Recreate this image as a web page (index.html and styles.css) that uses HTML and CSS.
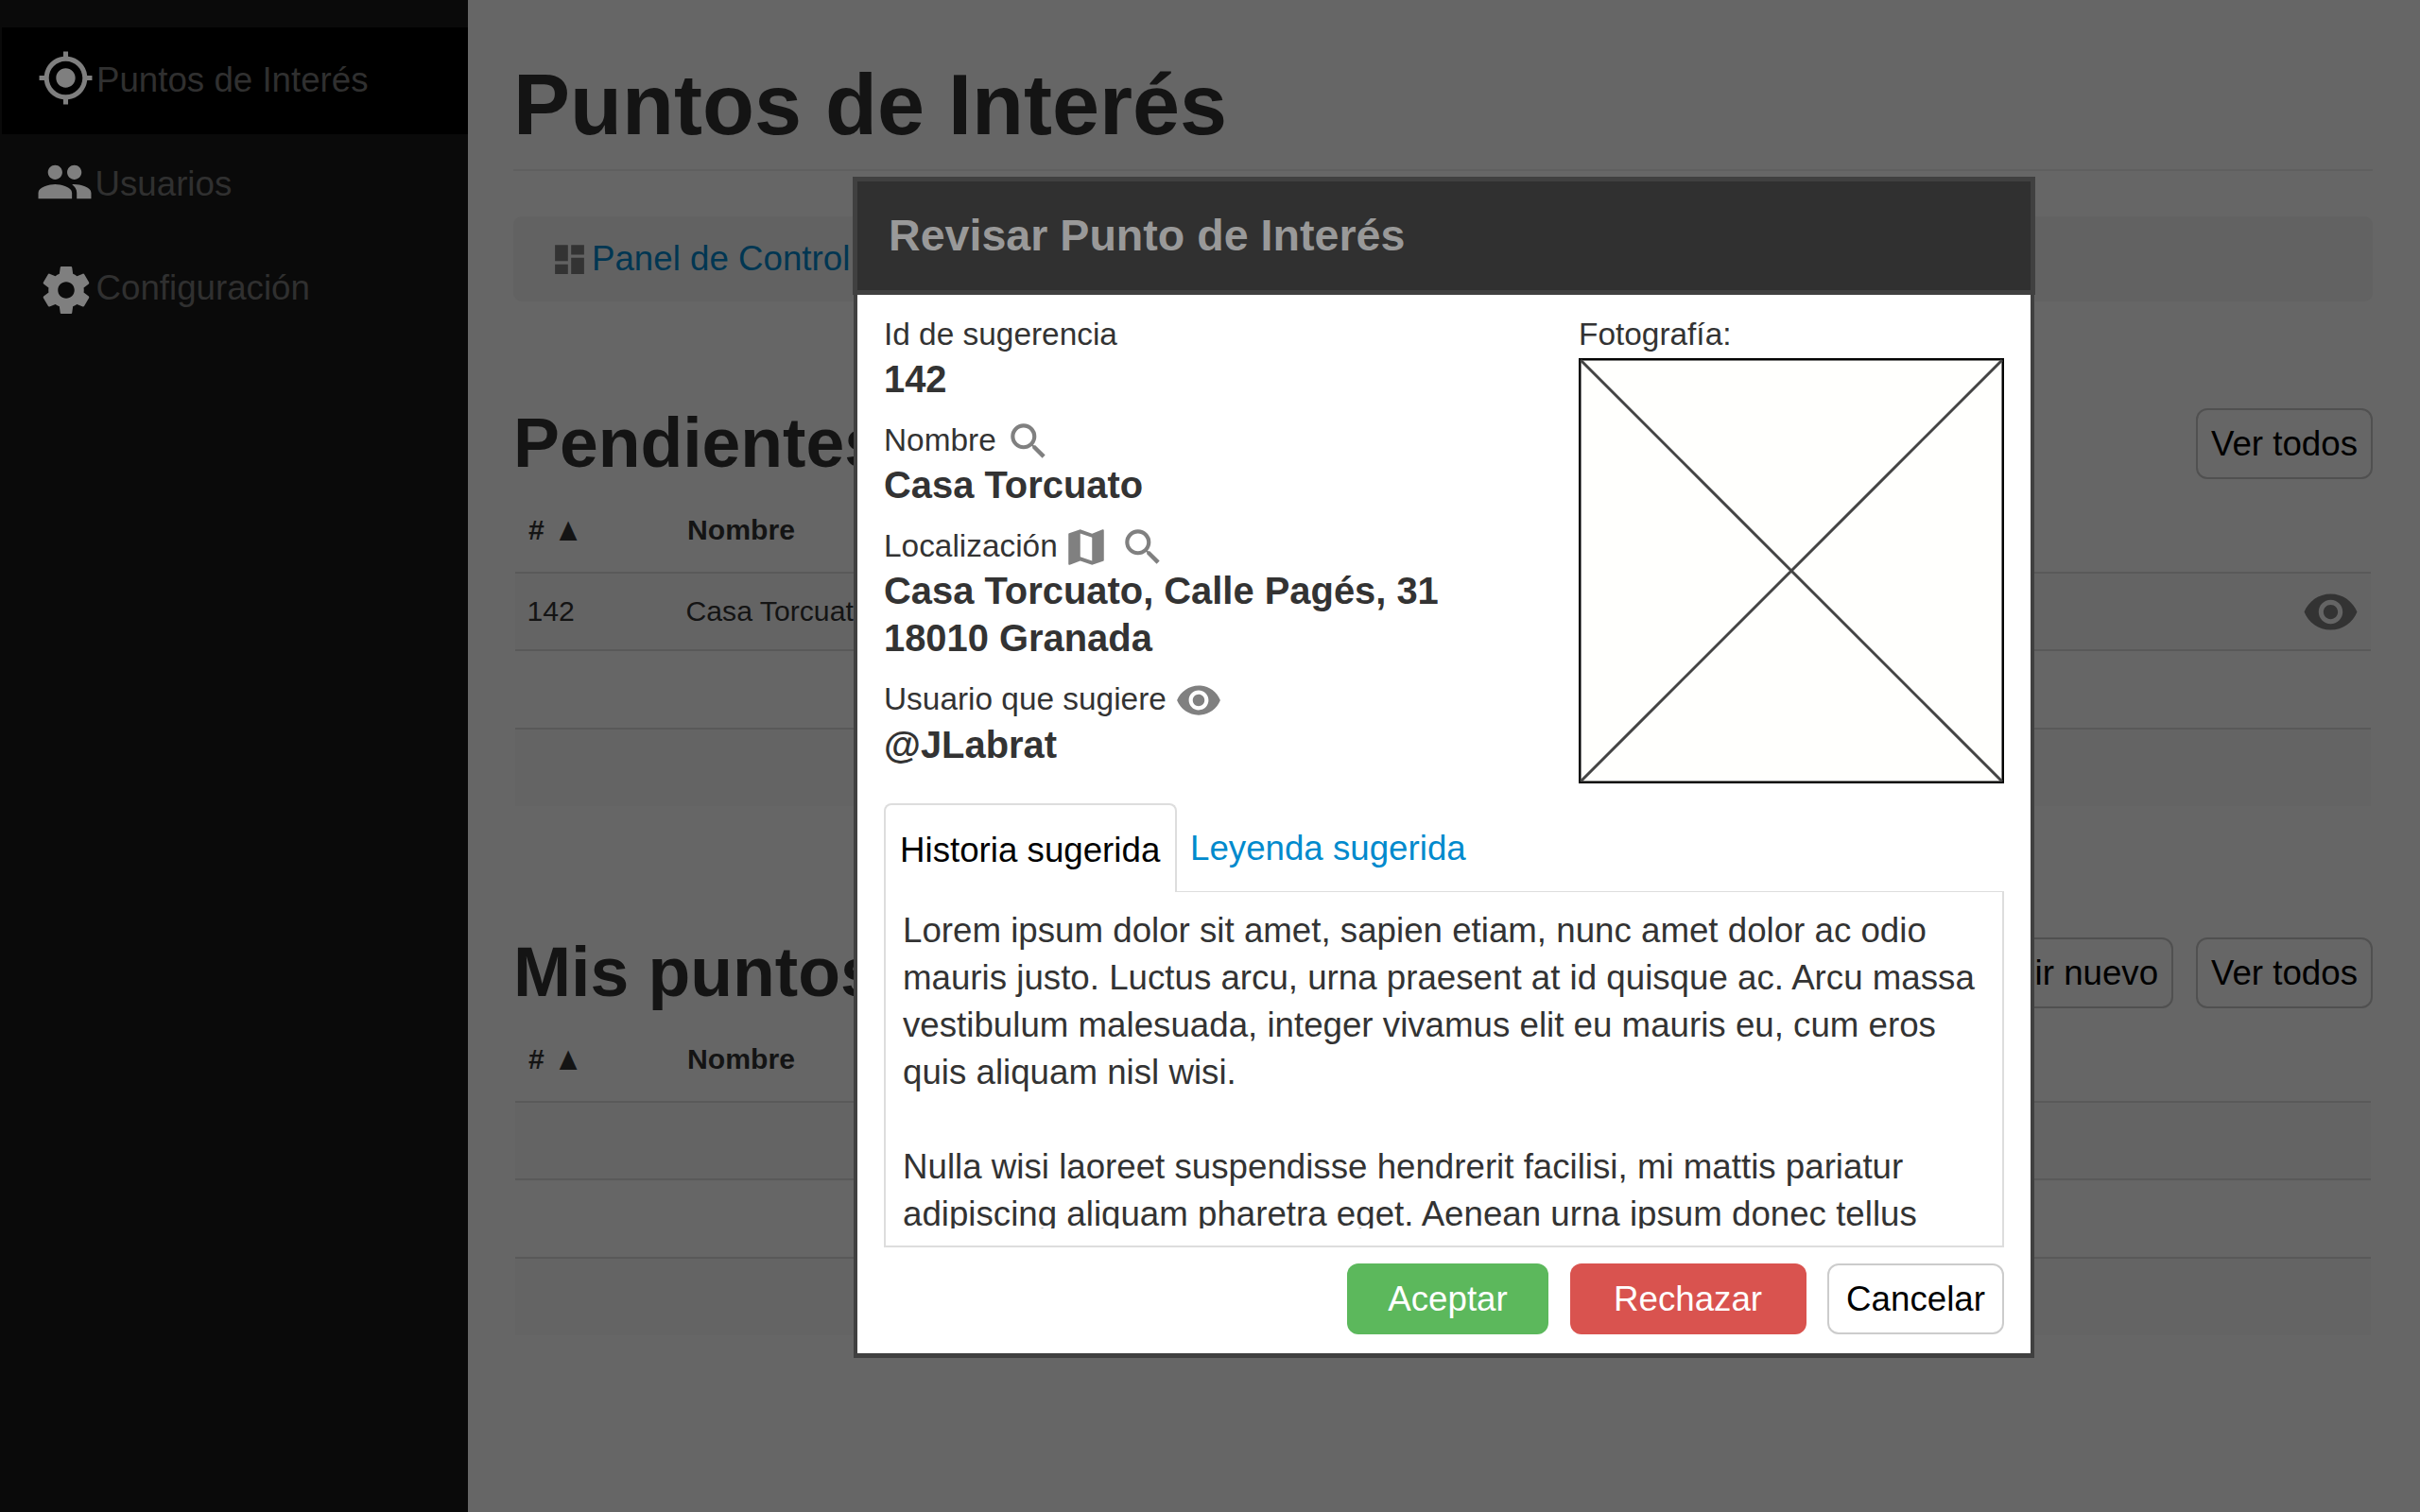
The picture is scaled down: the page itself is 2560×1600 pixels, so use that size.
FILE: index.html
```html
<!DOCTYPE html>
<html lang="es">
<head>
<meta charset="utf-8">
<title>Puntos de Interés</title>
<link rel="stylesheet" href="styles.css">
</head>
<body>
<svg class="sprite" aria-hidden="true">
  <symbol id="search" viewBox="0 0 24 24"><path d="M15.5 14h-.79l-.28-.27A6.471 6.471 0 0 0 16 9.5 6.5 6.5 0 1 0 9.5 16c1.61 0 3.09-.59 4.23-1.57l.27.28v.79l5 4.99L20.49 19l-4.99-5zm-6 0C7.01 14 5 11.99 5 9.5S7.01 5 9.5 5 14 7.01 14 9.5 11.99 14 9.5 14z"/></symbol>
  <symbol id="eye" viewBox="0 0 24 24"><path d="M12 4.5C7 4.5 2.73 7.61 1 12c1.73 4.39 6 7.5 11 7.5s9.27-3.11 11-7.5c-1.73-4.39-6-7.5-11-7.5zM12 17c-2.76 0-5-2.24-5-5s2.24-5 5-5 5 2.24 5 5-2.24 5-5 5zm0-8c-1.66 0-3 1.34-3 3s1.34 3 3 3 3-1.34 3-3-1.34-3-3-3z"/></symbol>
  <symbol id="map" viewBox="0 0 24 24"><path d="M20.5 3l-.16.03L15 5.1 9 3 3.36 4.9c-.21.07-.36.25-.36.48V20.5c0 .28.22.5.5.5l.16-.03L9 18.9l6 2.1 5.64-1.9c.21-.07.36-.25.36-.48V3.5c0-.28-.22-.5-.5-.5zM15 19l-6-2.11V5l6 2.11V19z"/></symbol>
  <symbol id="target" viewBox="0 0 24 24"><path d="M12 8c-2.21 0-4 1.79-4 4s1.79 4 4 4 4-1.79 4-4-1.79-4-4-4zm8.94 3A8.994 8.994 0 0 0 13 3.06V1h-2v2.06A8.994 8.994 0 0 0 3.06 11H1v2h2.06A8.994 8.994 0 0 0 11 20.94V23h2v-2.06A8.994 8.994 0 0 0 20.94 13H23v-2h-2.06zM12 19c-3.87 0-7-3.13-7-7s3.13-7 7-7 7 3.13 7 7-3.13 7-7 7z"/></symbol>
  <symbol id="people" viewBox="0 0 24 24"><path d="M16 11c1.66 0 2.99-1.34 2.99-3S17.66 5 16 5c-1.66 0-3 1.34-3 3s1.34 3 3 3zm-8 0c1.66 0 2.99-1.34 2.99-3S9.66 5 8 5C6.34 5 5 6.34 5 8s1.34 3 3 3zm0 2c-2.33 0-7 1.17-7 3.5V19h14v-2.500c0-2.330-4.670-3.500-7-3.500zm8 0c-.29 0-.62.02-.97.05 1.16.84 1.970 1.970 1.970 3.450V19h6v-2.500c0-2.330-4.670-3.500-7-3.500z"/></symbol>
  <symbol id="gear" viewBox="0 0 24 24"><path d="M19.430 12.980c.04-.32.07-.64.07-.98s-.03-.66-.07-.98l2.110-1.650c.19-.15.24-.42.12-.64l-2-3.460c-.12-.22-.39-.3-.61-.22l-2.490 1c-.52-.4-1.080-.73-1.690-.98l-.38-2.650C14.460 2.180 14.250 2 14 2h-4c-.25 0-.46.18-.49.42l-.38 2.650c-.61.25-1.170.59-1.690.98l-2.490-1c-.23-.09-.49 0-.61.22l-2 3.460c-.13.22-.07.49.12.64l2.110 1.650c-.04.32-.07.65-.07.98s.03.66.07.98l-2.110 1.650c-.19.15-.24.42-.12.64l2 3.460c.12.22.39.3.61.22l2.490-1c.52.4 1.080.73 1.690.98l.38 2.650c.03.24.24.42.49.42h4c.25 0 .46-.18.49-.42l.38-2.650c.61-.25 1.170-.59 1.690-.98l2.490 1c.23.09.49 0 .61-.22l2-3.460c.12-.22.07-.49-.12-.64l-2.110-1.650zM12 15.500c-1.930 0-3.500-1.570-3.500-3.500s1.570-3.500 3.500-3.500 3.500 1.570 3.500 3.500-1.570 3.500-3.500 3.500z"/></symbol>
  <symbol id="dashboard" viewBox="0 0 24 24"><path d="M3 13h8V3H3v10zm0 8h8v-6H3v6zm10 0h8V11h-8v10zm0-18v6h8V3h-8z"/></symbol>
</svg>

<div class="app">
  <nav class="sidebar">
    <a class="nav-item active"><svg class="nav-icon"><use href="#target"/></svg>Puntos de Interés</a>
    <a class="nav-item users"><svg class="nav-icon"><use href="#people"/></svg>Usuarios</a>
    <a class="nav-item settings"><svg class="nav-icon"><use href="#gear"/></svg>Configuración</a>
  </nav>

  <main class="main">
    <h1 class="title">Puntos de Interés</h1>
    <div class="breadcrumb"><svg class="crumb-icon"><use href="#dashboard"/></svg>Panel de Control</div>

    <section class="section">
      <header class="section-head">
        <h2 class="subtitle">Pendientes</h2>
        <button class="btn dim">Ver todos</button>
      </header>
      <table class="table">
        <colgroup><col class="col-id"><col><col class="col-actions"></colgroup>
        <thead><tr><th># <span class="sort">▲</span></th><th>Nombre</th><th></th></tr></thead>
        <tbody>
          <tr><td>142</td><td>Casa Torcuato</td><td class="actions"><svg class="row-icon"><use href="#eye"/></svg></td></tr>
          <tr><td></td><td></td><td></td></tr>
          <tr><td></td><td></td><td></td></tr>
        </tbody>
      </table>
    </section>

    <section class="section">
      <header class="section-head">
        <h2 class="subtitle">Mis puntos</h2>
        <button class="btn dim wide">Añadir nuevo</button>
        <button class="btn dim">Ver todos</button>
      </header>
      <table class="table">
        <colgroup><col class="col-id"><col><col class="col-actions"></colgroup>
        <thead><tr><th># <span class="sort">▲</span></th><th>Nombre</th><th></th></tr></thead>
        <tbody>
          <tr><td></td><td></td><td></td></tr>
          <tr><td></td><td></td><td></td></tr>
          <tr><td></td><td></td><td></td></tr>
        </tbody>
      </table>
    </section>
  </main>
</div>

<div class="modal" role="dialog">
  <header class="modal-head">Revisar Punto de Interés</header>
  <div class="modal-body">
    <div class="info">
      <div class="fields">
        <div class="field">
          <div class="label">Id de sugerencia</div>
          <div class="value">142</div>
        </div>
        <div class="field">
          <div class="label">Nombre<svg class="icon"><use href="#search"/></svg></div>
          <div class="value">Casa Torcuato</div>
        </div>
        <div class="field">
          <div class="label">Localización<svg class="icon icon-map"><use href="#map"/></svg><svg class="icon"><use href="#search"/></svg></div>
          <div class="value">Casa Torcuato, Calle Pagés, 31<br>18010 Granada</div>
        </div>
        <div class="field">
          <div class="label">Usuario que sugiere<svg class="icon"><use href="#eye"/></svg></div>
          <div class="value">@JLabrat</div>
        </div>
      </div>
      <div class="photo">
        <div class="label">Fotografía:</div>
        <svg class="placeholder" viewBox="0 0 450 450"><rect class="frame" x="1.250" y="1.250" width="447.500" height="447.500"/><path class="cross" d="M2 2L448 448M448 2L2 448"/></svg>
      </div>
    </div>

    <div class="tabs">
      <div class="tab selected">Historia sugerida</div>
      <div class="tab link">Leyenda sugerida</div>
    </div>
    <div class="panel">
      <div class="story">Lorem ipsum dolor sit amet, sapien etiam, nunc amet dolor ac odio<br>mauris justo. Luctus arcu, urna praesent at id quisque ac. Arcu massa<br>vestibulum malesuada, integer vivamus elit eu mauris eu, cum eros<br>quis aliquam nisl wisi.<br><br>Nulla wisi laoreet suspendisse hendrerit facilisi, mi mattis pariatur<br>adipiscing aliquam pharetra eget. Aenean urna ipsum donec tellus</div>
    </div>

    <footer class="modal-actions">
      <button class="btn accept">Aceptar</button>
      <button class="btn reject">Rechazar</button>
      <button class="btn">Cancelar</button>
    </footer>
  </div>
</div>
</body>
</html>
```
FILE: styles.css
```css
* { box-sizing: border-box; }

body {
  margin: 0;
  width: 2560px;
  height: 1600px;
  overflow: hidden;
  position: relative;
  background: #666;
  color: #141414;
  font-family: "Liberation Sans", Arial, sans-serif;
  font-size: 36.7px;
}

svg { fill: currentColor; flex: none; }
.sprite { display: none; }

.app { display: flex; height: 1600px; }

/* Sidebar */
.sidebar {
  width: 495px;
  flex: none;
  padding: 29px 0 0 2px;
  background: #0a0a0a;
}
.nav-item {
  display: flex;
  align-items: center;
  gap: 2px;
  height: 110px;
  padding: 2px 0 0 37.5px;
  color: #303030;
}
.nav-item.active {
  height: 113px;
  margin-bottom: -3px;
  padding: 0 0 1px 37px;
  background: #000;
}
.nav-item.users { padding-left: 35.5px; }
.nav-icon {
  width: 61px;
  height: 61px;
  margin-bottom: 6px;
  color: #7f7f7f;
}
.settings .nav-icon { width: 60px; height: 60px; margin: 4px 0 0; }

/* Main column */
.main {
  flex: 1;
  padding: 41px 50px 0 48px;
}
.title {
  height: 140px;
  margin: 0 0 48px;
  border-bottom: 2px solid #5f5f5f;
  font-size: 90px;
  line-height: 140px;
}
.breadcrumb {
  display: flex;
  align-items: center;
  gap: 3px;
  height: 90px;
  padding-left: 39px;
  border-radius: 9px;
  background: #626262;
  color: #003652;
}
.crumb-icon {
  width: 41px;
  height: 41px;
  color: #333;
}
.section { height: 448px; margin-top: 112px; }
.breadcrumb + .section { margin-top: 113px; }
.section-head {
  display: flex;
  align-items: center;
  gap: 24px;
  height: 75px;
}
.subtitle {
  flex: 1;
  margin: 0;
  font-size: 73.3px;
  line-height: 75px;
}
.btn {
  width: 187px;
  height: 75px;
  padding: 0;
  border: 2px solid #ccc;
  border-radius: 12px;
  background: transparent;
  color: #000;
  font: inherit;
}
.btn.dim { border-color: #505050; }
.btn.wide { width: 248px; }

.table {
  width: 1963px;
  margin: 11px 0 0 2px;
  border-collapse: collapse;
  table-layout: fixed;
  font-size: 30.2px;
}
.col-id { width: 168px; }
.col-actions { width: 125px; }
.table th {
  height: 88px;
  padding: 0 14px 2px;
  text-align: left;
}
.sort {
  display: inline-block;
  margin-left: 1px;
  font-size: 32px;
  line-height: 30px;
  transform: scaleY(1.1);
}
.table td {
  height: 82.300px;
  padding: 0 12.5px;
  border-top: 2px solid #595959;
}
.table tbody tr:nth-child(odd) { background: #646464; }
.table .actions { padding-right: 12px; text-align: right; }
.row-icon {
  display: inline-block;
  width: 61px;
  height: 61px;
  vertical-align: middle;
  color: #333;
}

/* Review dialog */
.modal {
  position: absolute;
  left: 902px;
  top: 187px;
  width: 1251px;
  height: 1250px;
  display: flex;
  flex-direction: column;
  color: #333;
}
.modal-head {
  flex: none;
  height: 125px;
  padding-left: 33px;
  border: 5px solid #404040;
  background: #303030;
  color: #999;
  font-size: 46.6px;
  font-weight: bold;
  line-height: 115px;
}
.modal-body {
  flex: 1;
  margin: 0 1px;
  padding: 18px 28px 0;
  border: solid #404040;
  border-width: 0 4px 5px;
  background: #fff;
}
.info {
  display: flex;
  justify-content: space-between;
  height: 520px;
}
.field { margin-bottom: 16.2px; }
.label {
  display: flex;
  align-items: center;
  height: 46px;
  padding-top: 1.5px;
  font-size: 33.4px;
}
.icon {
  width: 50px;
  height: 50px;
  margin: 2px 0 0 9.5px;
  color: #808080;
}
.icon-map { margin-left: 5.5px; }
.value {
  font-size: 39.9px;
  font-weight: bold;
  line-height: 50px;
}
.photo { width: 450px; }
.placeholder {
  display: block;
  width: 450px;
  height: 450px;
  margin-top: 3px;
}
.frame { fill: #fffffd; stroke: #000; stroke-width: 2.5px; }
.cross { stroke: #444; stroke-width: 3px; }

.tabs {
  display: flex;
  height: 94px;
}
.tab { line-height: 96px; }
.tab.selected {
  position: relative;
  width: 310px;
  padding-left: 15px;
  border: 2px solid #ddd;
  border-bottom: 0;
  border-radius: 8px 8px 0 0;
  background: #fff;
  color: #000;
}
.tab.link { padding-left: 14px; color: #008acd; }
.panel {
  height: 377px;
  margin-top: -1px;
  padding: 16px 18px 0;
  border: 2px solid #ddd;
  border-top-width: 1px;
}
.story {
  height: 340px;
  overflow: hidden;
  line-height: 50px;
  white-space: nowrap;
}
.modal-actions {
  display: flex;
  justify-content: flex-end;
  gap: 22.500px;
  padding-top: 17px;
}
.btn.accept, .btn.reject { border: 0; color: #fff; }
.btn.accept { width: 213px; background: #5cb85c; }
.btn.reject { width: 250px; background: #d9534f; }
```
